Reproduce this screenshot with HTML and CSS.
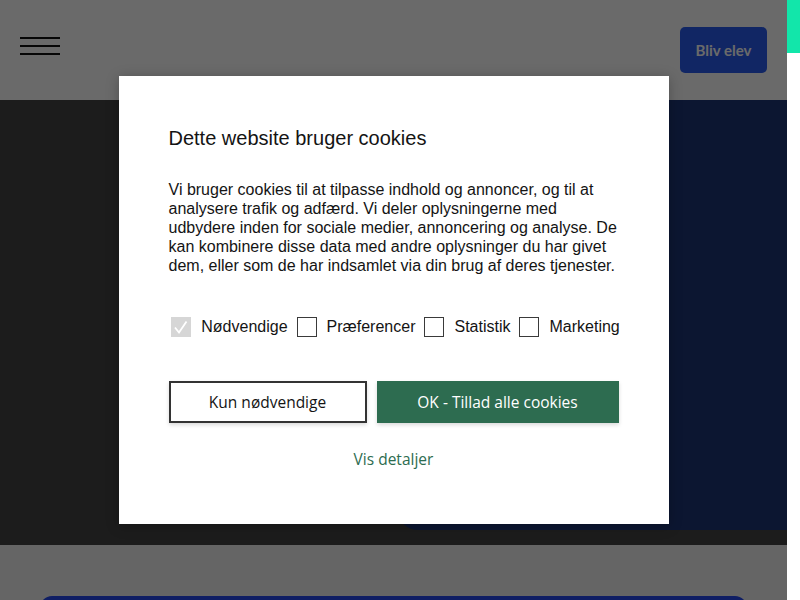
FILE: index.html
```html
<!DOCTYPE html>
<html lang="da">
<head>
  <meta charset="UTF-8">
  <meta name="viewport" content="width=device-width, initial-scale=1.0">
  <title>Bliv elev</title>
  <link rel="stylesheet" href="styles.css">
</head>
<body>

  <div class="screen">
    <div class="page">
      <!-- Top bar: menu + call to action -->
      <header class="topbar">
        <button class="burger" aria-label="Menu">
          <span></span><span></span><span></span>
        </button>
        <a href="#" class="cta">Bliv elev</a>
      </header>

      <section class="hero">
        <div class="hero-panel"></div>
      </section>

      <section class="next">
        <div class="next-card"></div>
      </section>

      <!-- Cookie consent dialog over the page -->
      <div class="backdrop">
        <div class="cookie-dialog">
          <h2 class="cookie-title">Dette website bruger cookies</h2>
          <p class="cookie-text">Vi bruger cookies til at tilpasse indhold og annoncer, og til at analysere trafik og adfærd. Vi deler oplysningerne med udbydere inden for sociale medier, annoncering og analyse. De kan kombinere disse data med andre oplysninger du har givet dem, eller som de har indsamlet via din brug af deres tjenester.</p>

          <div class="cookie-options">
            <label class="option">
              <span class="box box-locked">
                <svg width="20" height="20" viewBox="0 0 20 20"><path d="M4 10.5 L8 15.5 L15.5 4.5" fill="none" stroke="#fff" stroke-width="1.8"/></svg>
              </span>
              <span class="option-label">Nødvendige</span>
            </label>
            <label class="option">
              <span class="box"></span>
              <span class="option-label">Præferencer</span>
            </label>
            <label class="option">
              <span class="box"></span>
              <span class="option-label">Statistik</span>
            </label>
            <label class="option">
              <span class="box"></span>
              <span class="option-label">Marketing</span>
            </label>
          </div>

          <div class="cookie-buttons">
            <button class="btn btn-outline">Kun nødvendige</button>
            <button class="btn btn-accept">OK - Tillad alle cookies</button>
          </div>

          <a href="#" class="cookie-details">Vis detaljer</a>
        </div>
      </div>
    </div>

    <aside class="edge">
      <div class="edge-tab"></div>
    </aside>
  </div>

</body>
</html>
```

FILE: styles.css
```css
body, html {
  margin: 0;
  padding: 0;
  height: 100%;
  font-family: "Liberation Sans", Arial, sans-serif;
}

.screen {
  display: flex;
  height: 600px;
  overflow: hidden;
}

.page {
  flex: 1;
  position: relative;
  display: flex;
  flex-direction: column;
  background: #f2f2f2;
}

/* Top bar */
.topbar {
  height: 100px;
  flex-shrink: 0;
  background: #fff;
  padding: 0 20px;
  display: flex;
  align-items: center;
  justify-content: space-between;
}

.burger {
  width: 40px;
  height: 18px;
  margin-bottom: 8px;
  padding: 0;
  border: none;
  background: none;
  display: flex;
  flex-direction: column;
  justify-content: space-between;
}

.burger span {
  display: block;
  height: 2px;
  background: #111;
}

.cta {
  width: 87px;
  height: 46px;
  border-radius: 5px;
  background: #2a5cf0;
  color: #fff;
  font-family: Lato, sans-serif;
  font-weight: bold;
  font-size: 15px;
  text-decoration: none;
  display: flex;
  align-items: center;
  justify-content: center;
}

/* Hero */
.hero {
  height: 445px;
  flex-shrink: 0;
  background: #434343;
  display: flex;
  justify-content: flex-end;
  align-items: flex-start;
}

.hero-panel {
  width: 389px;
  height: 430px;
  background: #1d3576;
  border-bottom-left-radius: 20px;
}

/* Next section */
.next {
  flex: 1;
  padding: 51px 40px 0;
}

.next-card {
  height: 40px;
  background: #2448f0;
  border-radius: 12px 12px 0 0;
}

/* Right edge */
.edge {
  width: 13px;
  background: #fff;
}

.edge-tab {
  height: 53px;
  background: #12e6aa;
}

/* Cookie dialog */
.backdrop {
  position: absolute;
  inset: 0;
  background: rgba(0, 0, 0, 0.585);
  display: flex;
  align-items: center;
  justify-content: center;
}

.cookie-dialog {
  width: 550px;
  box-sizing: border-box;
  padding: 50px 50px 54px;
  background: #fff;
  color: #141414;
  display: flex;
  flex-direction: column;
  box-shadow: 0 2px 12px rgba(0, 0, 0, 0.25);
}

.cookie-title {
  margin: 0 0 30px;
  font-size: 20px;
  line-height: 24px;
  font-weight: normal;
}

.cookie-text {
  margin: 0 0 42px;
  font-size: 16px;
  line-height: 19px;
}

.cookie-options {
  display: flex;
  justify-content: center;
  gap: 9px;
  margin-bottom: 44px;
  padding-left: 4px;
}

.option {
  display: flex;
  align-items: center;
  gap: 10px;
  font-size: 16px;
  line-height: 20px;
}

.box {
  width: 20px;
  height: 20px;
  box-sizing: border-box;
  border: 1px solid #3a3a3a;
  background: #fff;
}

.box-locked {
  border: none;
  background: #d6d6d6;
}

.box svg {
  display: block;
}

.cookie-buttons {
  display: flex;
  gap: 10px;
}

.btn {
  height: 42px;
  box-sizing: border-box;
  font-family: "Open Sans", sans-serif;
  font-size: 15.5px;
  cursor: pointer;
  box-shadow: 0 2px 4px rgba(0, 0, 0, 0.15);
}

.btn-outline {
  flex: 0 0 198px;
  background: #fff;
  border: 2px solid #333;
  color: #141414;
}

.btn-accept {
  flex: 1;
  border: none;
  background: #2d6c50;
  color: #fff;
}

.cookie-details {
  margin-top: 25px;
  align-self: center;
  font-family: "Open Sans", sans-serif;
  font-size: 15.5px;
  line-height: 22px;
  color: #2d6c50;
  text-decoration: none;
}
```
